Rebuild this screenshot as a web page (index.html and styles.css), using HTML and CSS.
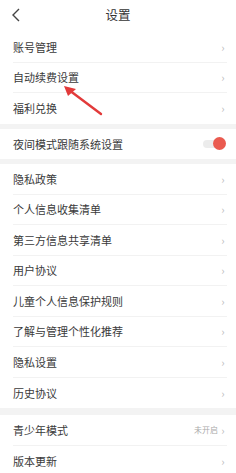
FILE: index.html
```html
<!DOCTYPE html>
<html lang="zh">
<head>
    <meta charset="UTF-8">
    <meta name="viewport" content="width=device-width, initial-scale=1.0">
    <title>设置</title>
    <link rel="stylesheet" href="styles.css">
</head>
<body>
    <div class="page">
        <div class="topbar">
            <svg class="back" width="10" height="14" viewBox="0 0 10 14"><path d="M8 1 L2 7 L8 13" fill="none" stroke="#444" stroke-width="1.4"/></svg>
            <div class="title">设置</div>
        </div>

        <div class="group">
            <div class="row"><span>账号管理</span><i class="chev">›</i></div>
            <div class="row"><span>自动续费设置</span><i class="chev">›</i></div>
            <div class="row"><span>福利兑换</span><i class="chev">›</i></div>
        </div>

        <div class="group">
            <div class="row"><span>夜间模式跟随系统设置</span>
                <div class="toggle"><div class="knob"></div></div>
            </div>
        </div>

        <div class="group">
            <div class="row"><span>隐私政策</span><i class="chev">›</i></div>
            <div class="row"><span>个人信息收集清单</span><i class="chev">›</i></div>
            <div class="row"><span>第三方信息共享清单</span><i class="chev">›</i></div>
            <div class="row"><span>用户协议</span><i class="chev">›</i></div>
            <div class="row"><span>儿童个人信息保护规则</span><i class="chev">›</i></div>
            <div class="row"><span>了解与管理个性化推荐</span><i class="chev">›</i></div>
            <div class="row"><span>隐私设置</span><i class="chev">›</i></div>
            <div class="row"><span>历史协议</span><i class="chev">›</i></div>
        </div>

        <div class="group last">
            <div class="row"><span>青少年模式</span><em class="status">未开启<i class="chev">›</i></em></div>
            <div class="row"><span>版本更新</span><i class="chev">›</i></div>
        </div>

        <!-- flecha roja de anotación -->
        <svg class="arrow" width="44" height="34" viewBox="0 0 44 34"><path d="M40 30 L8 6" stroke="#e23a3a" stroke-width="2.4" stroke-linecap="round"/><path d="M3 2 L15 5 L7 12 Z" fill="#e23a3a"/></svg>
    </div>
</body>
</html>
```

FILE: styles.css
```css
body {
    margin: 0;
    padding: 0;
    font-family: "Noto Sans CJK SC", "Noto Sans", sans-serif;
    background-color: #f3f3f3;
}

.page {
    position: relative;
    width: 236px;
}

.topbar {
    height: 32px;
    background-color: #fff;
    display: flex;
    align-items: center;
    justify-content: center;
    position: relative;
}

.back {
    position: absolute;
    left: 11px;
    top: 8px;
}

.title {
    font-size: 12.5px;
    color: #333;
    padding-bottom: 3px;
}

.group {
    background-color: #fff;
    margin-bottom: 5px;
}

.group.last {
    margin-top: 7px;
}

.row {
    height: 30.5px;
    margin: 0 9px 0 13px;
    display: flex;
    align-items: center;
    justify-content: space-between;
    border-bottom: 1px solid #f2f2f2;
    box-sizing: border-box;
    font-size: 11px;
    color: #3a3a3a;
}

.row:last-child {
    border-bottom: none;
}

.chev {
    font-style: normal;
    font-size: 11px;
    color: #bbb;
    width: 8px;
    text-align: center;
}

.status {
    font-style: normal;
    font-size: 8px;
    color: #aaa;
    display: flex;
    align-items: center;
    gap: 1px;
}

.toggle {
    width: 20px;
    height: 8px;
    border-radius: 4px;
    background-color: #ececec;
    position: relative;
    margin-right: 4px;
}

.knob {
    position: absolute;
    right: -3px;
    top: -2.5px;
    width: 13px;
    height: 13px;
    border-radius: 50%;
    background-color: #ea5a4f;
}

.arrow {
    position: absolute;
    left: 61px;
    top: 84px;
}
```
